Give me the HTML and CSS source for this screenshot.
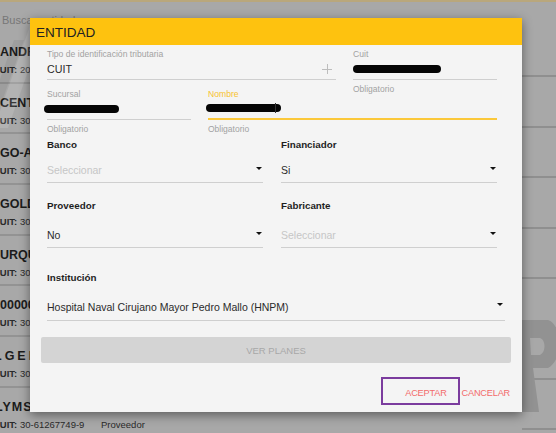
FILE: index.html
```html
<!DOCTYPE html>
<html lang="es">

<head>
    <meta charset="UTF-8">
    <meta name="viewport" content="width=device-width, initial-scale=1.0">
    <title>Entidad</title>
    <link rel="stylesheet" href="styles.css">
</head>

<body>
    <div class="page">
        <div class="search">Buscar entidad</div>
        <!-- logo de fondo -->
        <svg class="watermark" width="556" height="433" viewBox="0 0 556 433">
            <polygon points="30,26 44,26 8,128 -6,128" fill="rgba(255,255,255,0.13)" />
            <polygon points="14,40 24,40 -4,118 -14,118" fill="rgba(0,0,0,0.06)" />
            <path d="M518 320 L548 320 C562 324 564 360 548 368 L533 368 L539 412 L522 412 Z M530 338 L531 355 L540 355 C546 352 546 340 540 338 Z" fill="#929292" fill-rule="evenodd" />
        </svg>
        <div class="lists">
            <ul class="list">
                <li><b>ANDROMACO S.A.</b><span class="cuit"><b>CUIT:</b> 20-28411234-5</span></li>
                <li><b>CENTRO MEDICO</b><span class="cuit"><b>CUIT:</b> 30-70812345-1</span></li>
                <li><b>GO-ARGENTINA</b><span class="cuit"><b>CUIT:</b> 30-71234567-2</span></li>
                <li><b>GOLDEN CROSS</b><span class="cuit"><b>CUIT:</b> 30-69811122-7</span></li>
                <li><b>URQUIZA S.R.L.</b><span class="cuit"><b>CUIT:</b> 30-55512345-3</span></li>
                <li><b>0000012 S.A.</b><span class="cuit"><b>CUIT:</b> 30-50000012-0</span></li>
                <li><b class="spaced">LGENTEC</b><span class="cuit"><b>CUIT:</b> 30-64433221-6</span></li>
                <li><b class="spaced tight">LYMSA</b><span class="cuit"><b>CUIT:</b> 30-61267749-9 <span class="tag">Proveedor</span></span></li>
            </ul>
            <ul class="side">
                <li></li><li></li><li></li><li></li><li></li><li></li><li></li><li></li>
            </ul>
        </div>
    </div>

    <div class="dialog">
        <div class="dialog-title">ENTIDAD</div>
        <div class="dialog-body">
            <div class="row row-id">
                <div class="field">
                    <label>Tipo de identificación tributaria</label>
                    <div class="input">CUIT<span class="plus"></span></div>
                </div>
                <div class="field">
                    <label>Cuit</label>
                    <div class="input"><span class="blob" style="width: 88px"></span></div>
                    <small>Obligatorio</small>
                </div>
            </div>
            <div class="row row-name">
                <div class="field">
                    <label>Sucursal</label>
                    <div class="input"><span class="blob" style="width: 75px; margin-left: -3px"></span></div>
                    <small>Obligatorio</small>
                </div>
                <div class="field focused">
                    <label>Nombre</label>
                    <div class="input"><span class="blob" style="width: 75px; margin-left: -2px"></span><span class="caret"></span></div>
                    <small>Obligatorio</small>
                </div>
            </div>
            <div class="row row-half row-banco">
                <div class="field">
                    <h4>Banco</h4>
                    <div class="select empty">Seleccionar</div>
                </div>
                <div class="field">
                    <h4>Financiador</h4>
                    <div class="select">Si</div>
                </div>
            </div>
            <div class="row row-half row-prov">
                <div class="field">
                    <h4>Proveedor</h4>
                    <div class="select">No</div>
                </div>
                <div class="field">
                    <h4>Fabricante</h4>
                    <div class="select empty">Seleccionar</div>
                </div>
            </div>
            <div class="row row-inst">
                <div class="field">
                    <h4>Institución</h4>
                    <div class="select">Hospital Naval Cirujano Mayor Pedro Mallo (HNPM)</div>
                </div>
            </div>
            <button class="btn-planes" disabled>VER PLANES</button>
        </div>
        <div class="dialog-actions">
            <button class="btn-text focus">ACEPTAR</button>
            <button class="btn-text">CANCELAR</button>
        </div>
    </div>
</body>

</html>
```

FILE: styles.css
```css
* {
    box-sizing: border-box;
}

body {
    margin: 0;
    width: 556px;
    height: 433px;
    overflow: hidden;
    font-family: "Liberation Sans", Arial, sans-serif;
    background: #a8a8a8;
}

.page {
    position: relative;
    height: 433px;
    border-top: 2px solid #b9a77c;
}

.search {
    height: 31px;
    padding: 12px 0 0 2px;
    font-size: 11px;
    color: #777;
    white-space: nowrap;
}

.lists {
    display: flex;
}

.list,
.side {
    list-style: none;
    margin: 0;
    padding: 0;
}

.list {
    width: 522px;
}

.list li {
    height: 50.7px;
    padding-top: 12px;
    border-bottom: 2px solid #939393;
    white-space: nowrap;
    color: #1b1b1b;
}

.list li > b {
    display: block;
    font-size: 12.5px;
}

.list .spaced {
    letter-spacing: 3px;
    margin-left: -6px;
}

.list .tight {
    letter-spacing: 1px;
    margin-left: -5px;
}

.cuit {
    display: block;
    margin: 5px 0 0 -7px;
    font-size: 9.5px;
    color: #2a2a2a;
}

.tag {
    margin-left: 14px;
}

.side {
    width: 34px;
    margin-top: -6px;
}

.side li {
    height: 50.4px;
    border-bottom: 2px solid #8f8f8f;
}

.watermark {
    position: absolute;
    top: -2px;
    left: 0;
    pointer-events: none;
}

/* dialogo */
.dialog {
    position: absolute;
    left: 30px;
    top: 18px;
    width: 492px;
    height: 394px;
    background: #f4f4f4;
    box-shadow: 0 3px 10px rgba(0, 0, 0, 0.45);
    display: flex;
    flex-direction: column;
}

.dialog-title {
    height: 27px;
    padding: 2px 0 0 6px;
    line-height: 25px;
    font-size: 13.5px;
    color: #222;
    background: #fec20f;
}

.dialog-body {
    padding: 0 17px;
}

.row {
    display: grid;
}

.row-id {
    grid-template-columns: 289px 144px;
    column-gap: 17px;
    margin-top: 4px;
}

.row-name {
    grid-template-columns: 144px 289px;
    column-gap: 17px;
    margin-top: -5.5px;
}

.row-half {
    grid-template-columns: 216px 216px;
    column-gap: 18px;
}

.row-banco {
    margin-top: 3.5px;
}

.row-prov {
    margin-top: 16px;
}

.row-inst {
    grid-template-columns: 458px;
    margin-top: 23px;
}

.field label,
.field small {
    display: block;
    height: 11px;
    line-height: 11px;
    font-size: 8.6px;
    color: #a2a2a2;
}

.field small {
    margin-top: 4px;
    font-size: 8.5px;
}

.input {
    position: relative;
    display: flex;
    align-items: center;
    height: 19.5px;
    padding-bottom: 1px;
    border-bottom: 1.5px solid #cfcfcf;
    font-size: 10.7px;
    color: #2b2b2b;
}

.focused label {
    color: #f7c22f;
}

.focused .input {
    border-bottom: 2px solid #fbc83a;
}

.blob {
    display: block;
    height: 8px;
    border-radius: 4px;
    background: #050505;
}

.caret {
    width: 1px;
    height: 10px;
    margin-left: -6px;
    background: #333;
}

.plus {
    position: absolute;
    right: 4px;
    top: 4px;
    width: 10px;
    height: 10px;
}

.plus::before,
.plus::after {
    content: "";
    position: absolute;
    background: #bdbdbd;
}

.plus::before {
    left: 0;
    top: 4.5px;
    width: 10px;
    height: 1px;
}

.plus::after {
    left: 4.5px;
    top: 0;
    width: 1px;
    height: 10px;
}

.field h4 {
    margin: 0;
    height: 13px;
    line-height: 13px;
    font-size: 9.8px;
    font-weight: bold;
    color: #1e1e1e;
}

.select {
    position: relative;
    display: flex;
    align-items: flex-end;
    height: 32px;
    padding-bottom: 4px;
    line-height: 16px;
    border-bottom: 1.5px solid #cfcfcf;
    font-size: 10.5px;
    color: #2b2b2b;
}

.select::after {
    content: "";
    position: absolute;
    right: 1px;
    bottom: 12px;
    border-left: 3.5px solid transparent;
    border-right: 3.5px solid transparent;
    border-top: 3.5px solid #111;
}

.select.empty {
    color: #c6c6c6;
}

.row-prov .select {
    height: 36px;
}

.row-inst .select {
    height: 37px;
    padding-bottom: 5px;
}

.row-inst .select::after {
    bottom: 14px;
    right: 2px;
}

.btn-planes {
    display: block;
    width: 470px;
    height: 26px;
    margin: 16px -6px 0;
    border: 0;
    border-radius: 2px;
    background: #d4d4d4;
    font-family: inherit;
    font-size: 9.5px;
    color: #a8a8a8;
}

.dialog-actions {
    display: flex;
    justify-content: flex-end;
    padding: 14px 12px 0 0;
}

.btn-text {
    height: 28px;
    padding: 4px 0 0;
    border: 0;
    background: none;
    font-family: inherit;
    font-size: 9.2px;
    color: #f36b6b;
    letter-spacing: -0.2px;
}

.btn-text.focus {
    width: 79px;
    padding-right: 11px;
    text-align: right;
    border: 2px solid #7b3c9e;
}

.btn-text + .btn-text {
    margin-left: 2px;
}
```
